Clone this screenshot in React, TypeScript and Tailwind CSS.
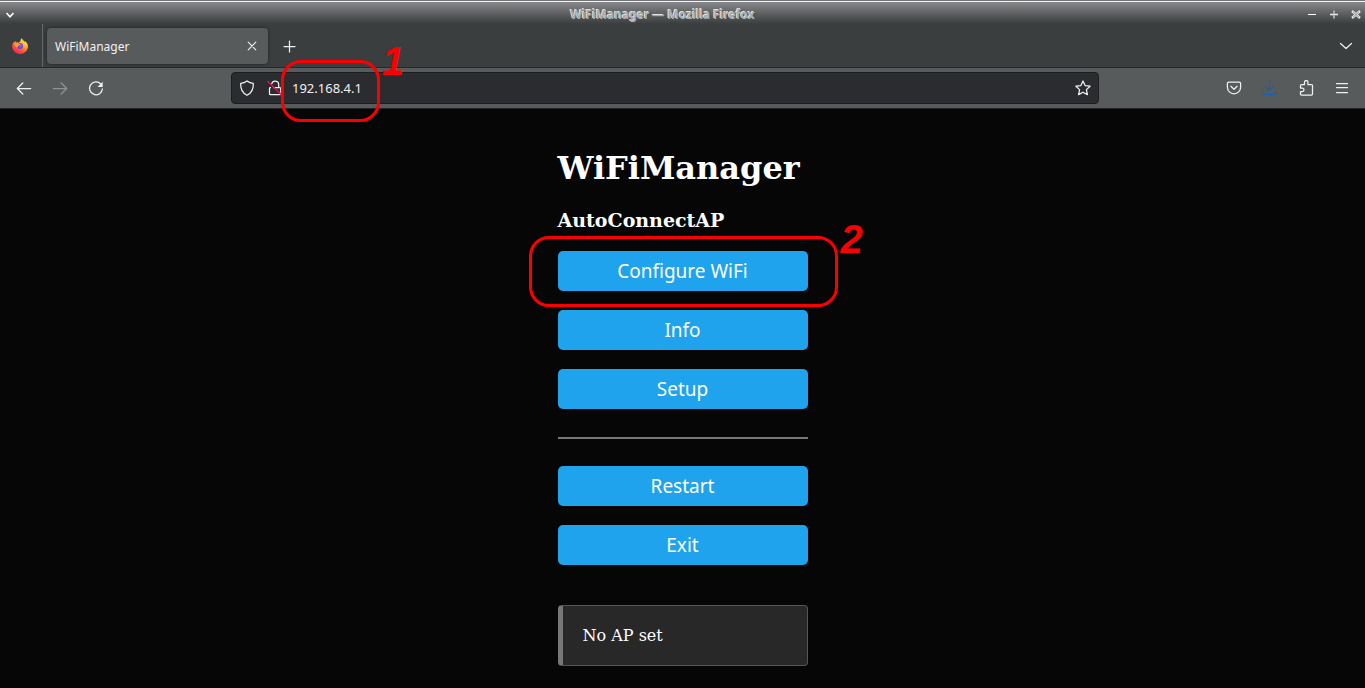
import type { ReactNode } from "react";

function Glyph({ children, className = "", size = 16 }: { children: ReactNode; className?: string; size?: number }) {
  return (
    <svg
      width={size}
      height={size}
      viewBox="0 0 16 16"
      fill="none"
      stroke="currentColor"
      strokeWidth="1.25"
      strokeLinecap="round"
      strokeLinejoin="round"
      aria-hidden="true"
      className={className}
    >
      {children}
    </svg>
  );
}

function ToolButton({ label, children, className = "text-[#f0f0f3]", disabled }: { label: string; children: ReactNode; className?: string; disabled?: boolean }) {
  return (
    <button type="button" aria-label={label} disabled={disabled} className={`flex h-8 w-9 shrink-0 items-center justify-center rounded ${className}`}>
      <Glyph>{children}</Glyph>
    </button>
  );
}

function FirefoxLogo() {
  return (
    <svg width="16" height="16" viewBox="0 0 16 16" aria-hidden="true">
      <defs>
        <linearGradient id="fox" x1="0.85" y1="0.05" x2="0.25" y2="1">
          <stop offset="0" stopColor="#fff44f" />
          <stop offset="0.35" stopColor="#ffb02e" />
          <stop offset="0.65" stopColor="#ff5a36" />
          <stop offset="1" stopColor="#f5156c" />
        </linearGradient>
        <radialGradient id="globe" cx="0.6" cy="0.4" r="0.7">
          <stop offset="0" stopColor="#9059ff" />
          <stop offset="1" stopColor="#5b3fc4" />
        </radialGradient>
      </defs>
      <path
        fill="url(#fox)"
        d="M10 .2c.4 1.6 1.3 2.2 2.5 3.4.2.2.3.5.5.8 0-.5-.1-.9-.2-1.3C15 4.500 16 6.600 15.900 8.800 15.700 12.800 12.200 16 8 16S.2 12.800.2 8.500C.2 6.600.8 5 1.900 3.800c0 .4 0 .7.1 1 .4-.8 1-1.400 1.800-1.900-.1.6 0 1.200.3 1.700.9-.1 1.800 0 2.600.3C7 4 7.800 3.500 8.500 3.300 8.400 2 9 .9 10 .2z"
      />
      <circle cx="8.200" cy="8" r="2.900" fill="url(#globe)" />
      <path fill="#ff9a2e" d="M2.200 5.300c1.300-1 3.300-.9 4.600.1.600.4 1.200.5 1.900.5-.2.900-1.200 1.100-2 1.500-.8.500-.7 1.700-1.600 2-1.300.4-2.700-2-2.900-4.100z" />
    </svg>
  );
}

function WindowTitleBar() {
  return (
    <header className="flex h-6 items-center border-t border-[#747678] bg-linear-to-b from-[#8b8c8f] to-[#3b3e3f] pl-1 pt-1 text-white shadow-[inset_0_1px_0_#f4f4f4]">
      <button type="button" aria-label="Window menu" className="flex w-3 justify-center">
        <svg width="10" height="8" viewBox="0 0 10 8" aria-hidden="true">
          <path d="M1.500 2 5 5.800 8.500 2" fill="none" stroke="#fff" strokeWidth="1.600" />
        </svg>
      </button>
      <h1 className="flex-1 pl-2 text-center font-['Noto_Sans','Liberation_Sans',sans-serif] text-[12px] leading-4 font-bold text-[#a9acae] [text-shadow:-1px_-1px_0_#dfe1e2,1px_1px_0_#4a4d4e]">
        WiFiManager — Mozilla Firefox
      </h1>
      <div className="flex pr-1">
        <button type="button" aria-label="Minimize" className="flex w-[22px] justify-center">
          <svg width="10" height="10" viewBox="0 0 10 10" aria-hidden="true">
            <path d="M1 4.500h8" stroke="#fff" strokeWidth="1" />
          </svg>
        </button>
        <button type="button" aria-label="Maximize" className="flex w-[22px] justify-center">
          <svg width="10" height="10" viewBox="0 0 10 10" aria-hidden="true">
            <path d="M1 4.500h8M5 .5v8" stroke="#a8a8a8" strokeWidth="2" />
            <path d="M1 4.500h8" stroke="#e8e8e8" strokeWidth="1" />
          </svg>
        </button>
        <button type="button" aria-label="Close window" className="-mr-[6px] flex w-[22px] justify-center">
          <svg width="10" height="10" viewBox="0 0 10 10" aria-hidden="true">
            <path d="m1 1 8 7m0-7-8 7" stroke="#e6e6e6" strokeWidth="2.400" />
            <path d="m2 1.800 6 5.400m0-5.400-6 5.400" stroke="#8f9193" strokeWidth="1" />
          </svg>
        </button>
      </div>
    </header>
  );
}

function TabStrip() {
  return (
    <div className="flex h-11 items-center border-b border-[#262829] bg-[#3b3e3f] text-[#f0f0f3]">
      <button type="button" aria-label="Firefox View" className="flex h-full w-[43px] shrink-0 items-center justify-center border-r border-[#65686a] pr-0.5">
        <FirefoxLogo />
      </button>
      <div className="ml-1 flex h-9 w-[221px] items-center justify-between rounded bg-[#585b5c] pl-2 pr-2 shadow-[0_0_3px_rgba(0,0,0,0.5)]">
        <span className="pt-0.5 font-['Noto_Sans','Liberation_Sans',sans-serif] text-[12px] leading-4">WiFiManager</span>
        <button type="button" aria-label="Close tab">
          <Glyph>
            <path d="m4.200 4.200 7.600 7.600m0-7.600-7.600 7.600" strokeWidth="1.100" />
          </Glyph>
        </button>
      </div>
      <button type="button" aria-label="New tab" className="ml-1 flex h-9 w-9 items-center justify-center">
        <Glyph>
          <path d="M2 8.500h11M7.500 3v11" />
        </Glyph>
      </button>
      <button type="button" aria-label="List all tabs" className="mr-[3px] ml-auto flex h-9 w-8 items-center justify-center">
        <Glyph>
          <path d="m2.500 5.500 5.500 5 5.500-5" />
        </Glyph>
      </button>
    </div>
  );
}

function NavigationBar() {
  return (
    <div className="flex h-[41px] items-center border-b border-[#232526] bg-[#585b5c] pr-[5px] pl-[6px]">
      <ToolButton label="Back">
        <path d="M14.700 8.500H1.500M6.800 3 1.300 8.500l5.500 5.500" />
      </ToolButton>
      <ToolButton label="Forward" disabled className="text-[#8f9192]">
        <path d="M1.300 8.500h13.200M9.200 3l5.500 5.500L9.200 14" />
      </ToolButton>
      <ToolButton label="Reload">
        <path d="M12.700 4A6.400 6.400 0 1 0 14.400 8.800" />
        <path d="M14.700 1.800v5.200H9.500z" fill="currentColor" stroke="none" />
      </ToolButton>
      <div className="mx-[117px] flex h-8 min-w-0 flex-1 items-center rounded border border-[#1d1e20] bg-[#2b2c2f] text-[#f0f0f3]">
        <button type="button" aria-label="Tracking protection" className="flex w-[30px] shrink-0 justify-center">
          <Glyph>
            <path d="M8 .9c1.900 1.500 4 2.200 6.300 2.400C14.600 8.500 12.800 13 8 15.300 3.200 13 1.400 8.500 1.700 3.300 4 3.100 6.100 2.400 8 .9z" />
          </Glyph>
        </button>
        <button type="button" aria-label="Connection is not secure" className="flex w-[26px] shrink-0 justify-center">
          <Glyph>
            <path d="M6.500 7.500h6.300c.6 0 1 .4 1 1v5.200c0 .6-.4 1-1 1H3.500c-.6 0-1-.4-1-1V8.500c0-.6.4-1 1-1M4.800 3.700a3.500 3.500 0 0 1 6.900.8v3" />
            <path d="m.8 1.500 14 13.500" stroke="#e8104a" strokeWidth="1.400" />
          </Glyph>
        </button>
        <div className="relative min-w-0 flex-1">
          <input
            id="address"
            type="text"
            aria-label="Address"
            defaultValue="192.168.4.1"
            className="block h-7 w-full bg-transparent pl-1 font-['Noto_Sans','Liberation_Sans',sans-serif] text-[13px] leading-5 outline-none"
          />
          <Callout number="1" className="-top-[14px] -left-[7px] h-[62px] w-[99px]" numberClassName="-top-[22px] left-[98px]" />
        </div>
        <button type="button" aria-label="Bookmark this page" className="flex w-[30px] shrink-0 justify-center">
          <Glyph>
            <path d="m8 1 2.100 4.600 5 .6-3.700 3.400 1 5L8 12.200l-4.400 2.400 1-5L.9 6.200l5-.6z" />
          </Glyph>
        </button>
      </div>
      <ToolButton label="Save to Pocket">
        <path d="M2.800 2.200h10.400c.8 0 1.400.6 1.400 1.400v3.600a6.600 6.600 0 0 1-13.200 0V3.600c0-.8.6-1.400 1.400-1.400z" />
        <path d="m4.900 6.300 3.100 3 3.100-3" />
      </ToolButton>
      <ToolButton label="Downloads" className="text-[#1460b4]">
        <path d="M7.500.5v10M3.500 6.700l4 4 4-4M1.500 12.500v.7c0 .8.500 1.300 1.300 1.300h9.400c.8 0 1.300-.5 1.300-1.300v-.7" strokeWidth="1.200" />
      </ToolButton>
      <ToolButton label="Extensions">
        <path d="M6.500 4.500V2.200a1.700 1.700 0 0 1 3.400 0v2.300h3.600c.6 0 1 .4 1 1v8.500c0 .6-.4 1-1 1H3.500c-.6 0-1-.4-1-1v-2.500h1.800a1.700 1.700 0 0 0 0-3.400H2.500V5.500c0-.6.4-1 1-1z" />
      </ToolButton>
      <ToolButton label="Application menu">
        <path d="M2.500 3.500h11M2.500 7.500h11M2.500 12.500h11" />
      </ToolButton>
    </div>
  );
}

function Callout({ number, className, numberClassName }: { number: string; className: string; numberClassName: string }) {
  return (
    <div className={`pointer-events-none absolute z-10 rounded-[20px] border-3 border-[#fb0000] ${className}`}>
      <span className={`absolute font-['Liberation_Sans',Arial,sans-serif] text-[40px] leading-10 font-bold text-[#fb0000] italic ${numberClassName}`}>
        {number}
      </span>
    </div>
  );
}

function MenuButton({ children }: { children: ReactNode }) {
  return (
    <button type="button" className="block h-10 w-full rounded-[5px] bg-[#1fa3ec] text-center font-['Noto_Sans','Liberation_Sans',sans-serif] text-[19px] leading-10 text-white">
      {children}
    </button>
  );
}

export default function App() {
  return (
    <div className="flex min-h-screen flex-col bg-[#060606]">
      <WindowTitleBar />
      <TabStrip />
      <NavigationBar />
      <main className="mx-auto w-[250px] pt-10 pb-[22px] font-['DejaVu_Serif',serif] text-white">
        <h1 className="text-[32px] leading-[38px] font-bold">WiFiManager</h1>
        <h3 className="mt-[22px] mb-[19px] text-[19px] leading-[23px] font-bold">AutoConnectAP</h3>
        <div className="flex flex-col gap-[19px]">
          <div className="relative">
            <MenuButton>Configure WiFi</MenuButton>
            <Callout number="2" className="-top-[15px] -left-[29px] h-[71px] w-[309px]" numberClassName="-top-[20px] left-[309px]" />
          </div>
          <MenuButton>Info</MenuButton>
          <MenuButton>Setup</MenuButton>
        </div>
        <hr className="mt-7 mb-[27px] h-0.5 border-0 bg-[#777777]" />
        <div className="flex flex-col gap-[19px]">
          <MenuButton>Restart</MenuButton>
          <MenuButton>Exit</MenuButton>
        </div>
        <div className="mt-10 rounded border border-l-5 border-[#555555] border-l-[#777777] bg-[#282828] px-5 py-[19px] text-[16px] leading-[21px]">
          No AP set
        </div>
      </main>
    </div>
  );
}
